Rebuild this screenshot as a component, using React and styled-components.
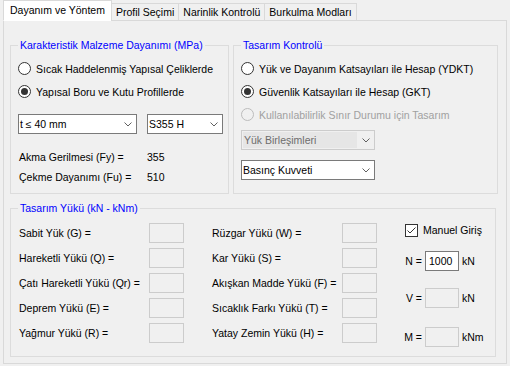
import React from 'react';
import styled, { createGlobalStyle } from 'styled-components';

const Global = createGlobalStyle`
  html, body { margin: 0; padding: 0; background: #f0f0f0; }
  body {
    font-family: "Liberation Sans", Arial, sans-serif;
    font-size: 10.5px;
    color: #000;
  }
  #root { width: 510px; height: 366px; overflow: hidden; }
`;

const Window = styled.div`
  width: 510px;
  height: 366px;
  display: flex;
  flex-direction: column;
  background: #f0f0f0;
`;

const TabStrip = styled.div`
  position: relative;
  z-index: 1;
  display: flex;
  align-items: flex-end;
  height: 21px;
  margin-bottom: -1px;
  padding-left: 3px;
`;

const Tab = styled.div`
  box-sizing: border-box;
  height: ${p => (p.$active ? 21 : 18)}px;
  padding: ${p => (p.$active ? '0 6px 1px' : '0 4px')};
  margin-right: -1px;
  display: flex;
  align-items: center;
  white-space: nowrap;
  border: 1px solid #d9d9d9;
  border-bottom: ${p => (p.$active ? '1px solid #fff' : '1px solid #d9d9d9')};
  background: ${p => (p.$active ? '#fff' : '#f0f0f0')};
`;

const TabPage = styled.div`
  box-sizing: border-box;
  height: 344px;
  margin: 0 3px;
  border: 1px solid #d9d9d9;
  background: #f0f0f0;
  padding: 24px 0 0 6px;
  display: flex;
  flex-direction: column;
  gap: 14px;
`;

const TopRow = styled.div`
  display: flex;
  gap: 4px;
`;

const GroupBox = styled.div`
  position: relative;
  box-sizing: border-box;
  width: ${p => p.$w}px;
  height: 149px;
  border: 1px solid #dcdcdc;
  padding: ${p => p.$pad};
  display: flex;
  flex-direction: column;
`;

const Legend = styled.div`
  position: absolute;
  top: -7px;
  left: 7px;
  padding: 0 2px;
  line-height: 13px;
  background: #f0f0f0;
  color: #0000ff;
  white-space: nowrap;
`;

const RadioRow = styled.div`
  display: flex;
  align-items: center;
  gap: 5px;
  height: 23px;
  padding-left: 7px;
  white-space: nowrap;
  color: ${p => (p.$disabled ? '#a0a0a0' : '#000')};
`;

const RadioCircle = styled.span`
  box-sizing: border-box;
  width: 13px;
  height: 13px;
  flex: none;
  border-radius: 50%;
  border: 1px solid ${p => (p.$disabled ? '#bcbcbc' : '#333')};
  background: ${p => (p.$disabled ? '#f0f0f0' : '#fff')};
  display: flex;
  align-items: center;
  justify-content: center;
  &::after {
    content: '';
    display: ${p => (p.$checked ? 'block' : 'none')};
    width: 7px;
    height: 7px;
    border-radius: 50%;
    background: #333;
  }
`;

const ComboRow = styled.div`
  display: flex;
  gap: ${p => p.$gap || 10}px;
  margin-top: ${p => p.$mt}px;
  padding-left: 7px;
`;

const Combo = styled.div`
  box-sizing: border-box;
  width: ${p => p.$w}px;
  height: 20px;
  display: flex;
  align-items: stretch;
  border: 1px solid ${p => (p.$disabled ? '#cccccc' : '#7a7a7a')};
  background: ${p => (p.$disabled ? '#f0f0f0' : '#fff')};
  color: ${p => (p.$disabled ? '#6d6d6d' : '#000')};
  white-space: nowrap;
`;

const ComboText = styled.div`
  flex: 1;
  display: flex;
  align-items: center;
  padding-left: 1px;
  margin: ${p => (p.$disabled ? '1px 0 1px 1px' : '0')};
  background: ${p => (p.$disabled ? '#e6e6e6' : 'transparent')};
`;

const ComboArrow = styled.div`
  width: 17px;
  flex: none;
  display: flex;
  align-items: center;
  justify-content: center;
`;

const ValueRow = styled.div`
  display: flex;
  align-items: center;
  height: 20px;
  padding-left: 8px;
  margin-top: ${p => p.$mt || 0}px;
`;

const ValueLabel = styled.span`
  width: 128px;
  flex: none;
  white-space: nowrap;
`;

const LoadGrid = styled.div`
  display: flex;
  gap: 28px;
  padding-left: 8px;
`;

const LoadColumn = styled.div`
  display: flex;
  flex-direction: column;
  gap: 5px;
  width: ${p => p.$w}px;
  padding-top: 14px;
`;

const LoadRow = styled.div`
  display: flex;
  align-items: center;
  justify-content: space-between;
  height: 20px;
  white-space: nowrap;
`;

const TextBox = styled.div`
  box-sizing: border-box;
  width: ${p => p.$w || 35}px;
  height: 20px;
  flex: none;
  display: flex;
  align-items: center;
  padding-left: 3px;
  border: 1px solid ${p => (p.$enabled ? '#7a7a7a' : '#cccccc')};
  background: ${p => (p.$enabled ? '#fff' : '#f0f0f0')};
`;

const ManualColumn = styled.div`
  display: flex;
  flex-direction: column;
  padding-top: 11px;
`;

const CheckRow = styled.div`
  display: flex;
  align-items: center;
  gap: 5px;
  height: 20px;
  white-space: nowrap;
`;

const CheckBox = styled.span`
  box-sizing: border-box;
  width: 13px;
  height: 13px;
  border: 1px solid #333;
  background: #fff;
  display: flex;
  align-items: center;
  justify-content: center;
`;

const ForceRow = styled.div`
  display: flex;
  align-items: center;
  height: 20px;
  margin-top: ${p => p.$mt}px;
  white-space: nowrap;
`;

const ForceLabel = styled.span`
  width: 18px;
  margin-left: -1px;
  margin-right: 3px;
  text-align: right;
`;

const Unit = styled.span`
  margin-left: 3px;
`;

const Chevron = () => (
  <svg width="8" height="5" viewBox="0 0 8 5">
    <polyline points="0.5,0.5 4,4 7.5,0.5" fill="none" stroke="#606060" strokeWidth="1" />
  </svg>
);

const Radio = ({ checked, disabled, children }) => (
  <RadioRow $disabled={disabled}>
    <RadioCircle $checked={checked} $disabled={disabled} />
    <span>{children}</span>
  </RadioRow>
);

const Select = ({ w, disabled, children }) => (
  <Combo $w={w} $disabled={disabled}>
    <ComboText $disabled={disabled}>{children}</ComboText>
    <ComboArrow><Chevron /></ComboArrow>
  </Combo>
);

const leftLoads = [
  'Sabit Yük (G) =',
  'Hareketli Yükü (Q) =',
  'Çatı Hareketli Yükü (Qr) =',
  'Deprem Yükü (E) =',
  'Yağmur Yükü (R) =',
];

const midLoads = [
  'Rüzgar Yükü (W) =',
  'Kar Yükü (S) =',
  'Akışkan Madde Yükü (F) =',
  'Sıcaklık Farkı Yükü (T) =',
  'Yatay Zemin Yükü (H) =',
];

export default function App() {
  return (
    <Window>
      <Global />
      <TabStrip>
        <Tab $active>Dayanım ve Yöntem</Tab>
        <Tab>Profil Seçimi</Tab>
        <Tab>Narinlik Kontrolü</Tab>
        <Tab>Burkulma Modları</Tab>
      </TabStrip>
      <TabPage>
        <TopRow>
          <GroupBox $w={219} $pad="11px 0 0 0">
            <Legend>Karakteristik Malzeme Dayanımı (MPa)</Legend>
            <Radio>Sıcak Haddelenmiş Yapısal Çeliklerde</Radio>
            <Radio checked>Yapısal Boru ve Kutu Profillerde</Radio>
            <ComboRow $mt={11}>
              <Select w={119}>t ≤ 40 mm</Select>
              <Select w={76}>S355 H</Select>
            </ComboRow>
            <ValueRow $mt={13}>
              <ValueLabel>Akma Gerilmesi (Fy) =</ValueLabel>
              <span>355</span>
            </ValueRow>
            <ValueRow>
              <ValueLabel>Çekme Dayanımı (Fu) =</ValueLabel>
              <span>510</span>
            </ValueRow>
          </GroupBox>
          <GroupBox $w={265} $pad="11px 0 0 0">
            <Legend>Tasarım Kontrolü</Legend>
            <Radio>Yük ve Dayanım Katsayıları ile Hesap (YDKT)</Radio>
            <Radio checked>Güvenlik Katsayıları ile Hesap (GKT)</Radio>
            <Radio disabled>Kullanılabilirlik Sınır Durumu için Tasarım</Radio>
            <ComboRow $mt={4}>
              <Select w={134} disabled>Yük Birleşimleri</Select>
            </ComboRow>
            <ComboRow $mt={10}>
              <Select w={134}>Basınç Kuvveti</Select>
            </ComboRow>
          </GroupBox>
        </TopRow>
        <GroupBox $w={486} $pad="0">
          <Legend>Tasarım Yükü (kN - kNm)</Legend>
          <LoadGrid>
            <LoadColumn $w={165}>
              {leftLoads.map(l => (
                <LoadRow key={l}>
                  <span>{l}</span>
                  <TextBox />
                </LoadRow>
              ))}
            </LoadColumn>
            <LoadColumn $w={165}>
              {midLoads.map(l => (
                <LoadRow key={l}>
                  <span>{l}</span>
                  <TextBox />
                </LoadRow>
              ))}
            </LoadColumn>
            <ManualColumn>
              <CheckRow>
                <CheckBox>
                  <svg width="11" height="11" viewBox="0 0 11 11">
                    <polyline points="1.5,5.5 4,8 9.5,2.5" fill="none" stroke="#333" strokeWidth="1" />
                  </svg>
                </CheckBox>
                <span>Manuel Giriş</span>
              </CheckRow>
              <ForceRow $mt={11}>
                <ForceLabel>N =</ForceLabel>
                <TextBox $enabled $w={34}>1000</TextBox>
                <Unit>kN</Unit>
              </ForceRow>
              <ForceRow $mt={17}>
                <ForceLabel>V =</ForceLabel>
                <TextBox $w={34} />
                <Unit>kN</Unit>
              </ForceRow>
              <ForceRow $mt={19}>
                <ForceLabel>M =</ForceLabel>
                <TextBox $w={34} />
                <Unit>kNm</Unit>
              </ForceRow>
            </ManualColumn>
          </LoadGrid>
        </GroupBox>
      </TabPage>
    </Window>
  );
}
